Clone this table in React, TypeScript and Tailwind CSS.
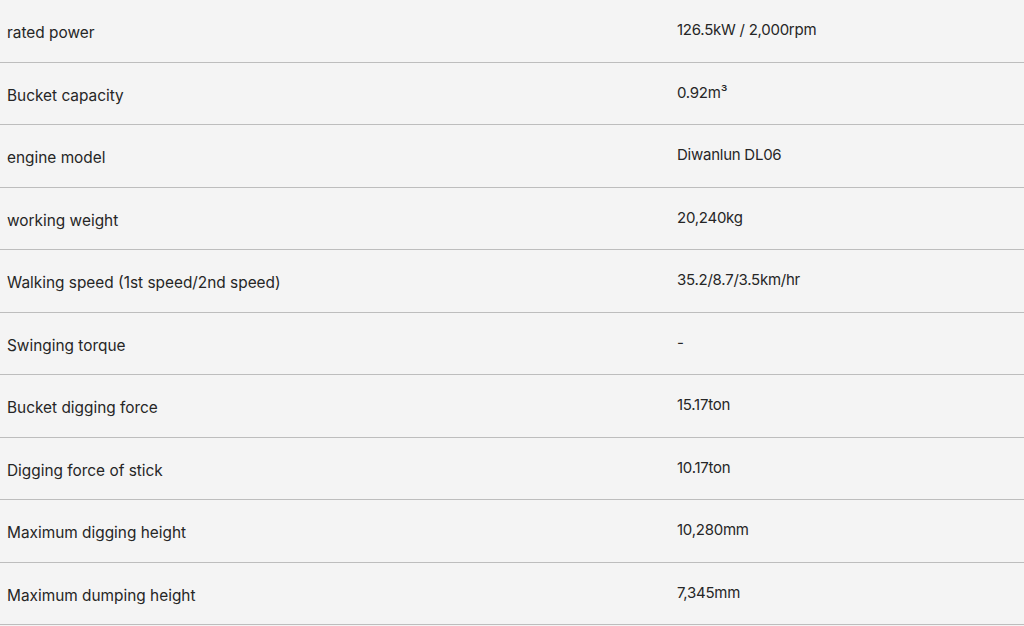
import React from "react";

const specs = [
  { label: "rated power", value: "126.5kW / 2,000rpm" },
  { label: "Bucket capacity", value: "0.92m³" },
  { label: "engine model", value: "Diwanlun DL06" },
  { label: "working weight", value: "20,240kg" },
  { label: "Walking speed (1st speed/2nd speed)", value: "35.2/8.7/3.5km/hr" },
  { label: "Swinging torque", value: "-" },
  { label: "Bucket digging force", value: "15.17ton" },
  { label: "Digging force of stick", value: "10.17ton" },
  { label: "Maximum digging height", value: "10,280mm" },
  { label: "Maximum dumping height", value: "7,345mm" },
];

export default function App() {
  return (
    <div
      className="w-[1024px] h-[626px] bg-[#f4f4f4] text-[#262626] overflow-hidden"
      style={{ fontFamily: "Inter, 'Liberation Sans', Arial, sans-serif" }}
    >
      {specs.map((row) => (
        <div
          key={row.label}
          className="grid grid-cols-[677px_1fr] h-[62.5px] border-b-[1.5px] border-[#bdbdbd]"
        >
          <div className="flex items-center pl-[7px] pt-[4px] text-[15.4px]">{row.label}</div>
          <div className="flex items-center pb-[1px] text-[15px] tracking-[-0.25px]">{row.value}</div>
        </div>
      ))}
    </div>
  );
}
